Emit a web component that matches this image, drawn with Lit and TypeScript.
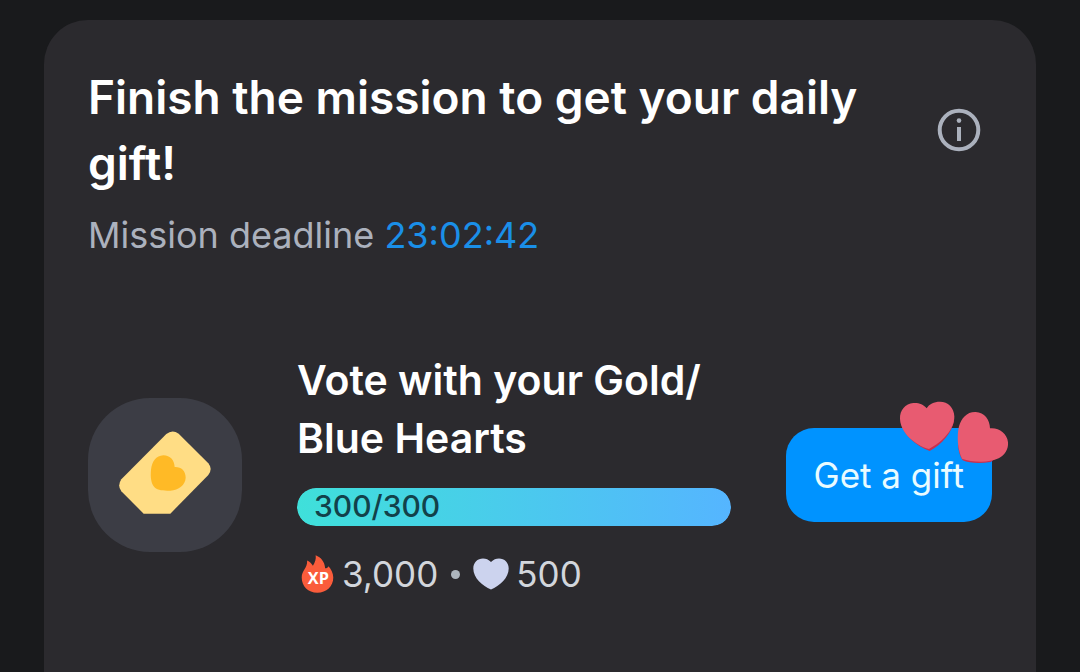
import { LitElement, html, css } from "lit";
import { customElement, property, state } from "lit/decorators.js";

@customElement("gift-button")
class GiftButton extends LitElement {
  static styles = css`
    :host {
      display: block;
      position: relative;
      flex: none;
    }
    .button {
      display: block;
      height: 94px;
      padding: 0 28px;
      border: 0;
      border-radius: 28px;
      background: #0093ff;
      color: #e9fbff;
      font: 400 35px/52px Inter, sans-serif;
      white-space: nowrap;
      cursor: pointer;
    }
    .hearts {
      position: absolute;
      top: -28px;
      right: -18px;
      width: 112px;
      height: 65px;
      pointer-events: none;
    }
  `;

  render() {
    return html`
      <button class="button" type="button">Get a gift</button>
      <svg class="hearts" viewBox="384 45 336 195" aria-hidden="true">
        <path fill="#c9304f" d="M392 112C400 150 436 182 479 198C516 178 545 144 552 108Z" />
        <path fill="#e85b71" d="M470 70C460 57 446 53 430 54C406 56 389 76 390 101C392 144 434 179 477 192C517 172 554 132 553 94C552 68 534 50 510 50C492 50 477 57 470 70Z" />
        <path fill="#c9304f" d="M564 180C566 200 570 215 578 226C598 235 630 236 662 231L700 205Z" />
        <path fill="#e85b71" d="M660 130C660 104 643 82 617 81C591 80 574 99 567 124C560 153 563 194 576 221C606 232 655 235 686 220C704 211 716 193 714 172C712 145 686 127 660 130Z" />
      </svg>
    `;
  }
}

@customElement("mission-progress")
class MissionProgress extends LitElement {
  @property({ type: Number }) value = 0;
  @property({ type: Number }) max = 100;

  static styles = css`
    :host {
      display: block;
    }
    .track {
      display: grid;
      height: 38px;
      border-radius: 19px;
      background: #3c3d45;
      overflow: hidden;
    }
    .fill,
    .label {
      grid-area: 1 / 1;
    }
    .fill {
      border-radius: 19px;
      background: linear-gradient(90deg, #3fe0da, #55b5ff);
    }
    .label {
      padding-left: 17px;
      color: #12414a;
      font-size: 30px;
      font-weight: 500;
      line-height: 36px;
    }
  `;

  render() {
    return html`
      <div
        class="track"
        role="progressbar"
        aria-label="Mission progress"
        aria-valuenow=${this.value}
        aria-valuemax=${this.max}
      >
        <div class="fill" style="width: ${(this.value / this.max) * 100}%"></div>
        <span class="label">${this.value}/${this.max}</span>
      </div>
    `;
  }
}

@customElement("app-root")
class AppRoot extends LitElement {
  @state() deadline = "23:02:42";

  static styles = css`
    :host {
      display: flex;
      flex-direction: column;
      box-sizing: border-box;
      min-height: 100vh;
      padding: 20px 44px 0;
      background: #191a1c;
      color: #fff;
      font-family: Inter, sans-serif;
    }
    .card {
      flex: 1;
      padding: 44px;
      border-radius: 44px 44px 0 0;
      background: #2b2a2e;
    }
    .header {
      display: flex;
      align-items: center;
      gap: 40px;
    }
    .title {
      flex: 1;
      margin: 0;
      font-size: 46px;
      font-weight: 600;
      line-height: 66px;
    }
    .info {
      flex: none;
      width: 44px;
      height: 44px;
      margin-right: 11px;
      padding: 0;
      border: 0;
      background: none;
      cursor: pointer;
    }
    .info-icon {
      display: block;
      width: 44px;
      height: 44px;
    }
    .deadline {
      margin: 13px 0 0;
      color: #abb1bd;
      font-size: 36px;
      line-height: 52px;
    }
    .time {
      color: #1a8fe8;
    }
    .mission {
      display: flex;
      align-items: center;
      gap: 55px;
      margin-top: 90px;
    }
    .badge {
      display: grid;
      flex: none;
      place-items: center;
      width: 154px;
      height: 154px;
      border-radius: 62px;
      background: #3c3d45;
    }
    .ticket {
      width: 92px;
      height: 84px;
      margin-bottom: 4px;
    }
    .details {
      flex: 1;
      min-width: 0;
    }
    .name {
      margin: 0 0 21px;
      font-size: 41px;
      font-weight: 600;
      line-height: 58px;
    }
    .rewards {
      display: flex;
      align-items: center;
      margin-top: 23px;
      padding-left: 4px;
      color: #d2d6dc;
      font-size: 35px;
      line-height: 50px;
    }
    .flame {
      width: 33px;
      height: 38px;
      margin-right: 8px;
    }
    .xp {
      font: 700 48px "Open Sans", sans-serif;
    }
    .dot {
      width: 9px;
      height: 9px;
      margin: 0 13px;
      border-radius: 50%;
      background: #adb5bd;
    }
    .heart {
      width: 36px;
      height: 32px;
      margin-right: 7px;
    }
  `;

  render() {
    return html`
      <main class="card">
        <header class="header">
          <h1 class="title">Finish the mission to get your daily gift!</h1>
          <button class="info" type="button" aria-label="Mission info">
            <svg class="info-icon" viewBox="0 0 44 44" aria-hidden="true">
              <circle cx="22" cy="22" r="19.3" fill="none" stroke="#abb1bd" stroke-width="4" />
              <circle cx="22" cy="12.6" r="2.3" fill="#abb1bd" />
              <rect x="20" y="19" width="4" height="14" fill="#abb1bd" />
            </svg>
          </button>
        </header>
        <p class="deadline">
          Mission deadline <time class="time">${this.deadline}</time>
        </p>
        <section class="mission">
          <div class="badge">
            <svg class="ticket" viewBox="147 154 276 252" aria-hidden="true">
              <path fill="#ffdd85" d="M289 163Q307 148 326 162L415 251Q429 268 415 286L301 402H221L154 335Q141 318 154 299Z" />
              <path fill="#ffba26" d="M314 262C313 242 301 227 280 227C258 228 246 246 243 270C241 292 243 308 251 320C260 332 279 334 301 333C326 331 346 316 347 294C347 273 333 261 314 262Z" />
            </svg>
          </div>
          <div class="details">
            <h2 class="name">Vote with your Gold/<wbr />Blue Hearts</h2>
            <mission-progress .value=${300} .max=${300}></mission-progress>
            <div class="rewards">
              <svg class="flame" viewBox="50 242 95 112" role="img" aria-label="XP">
                <path fill="#fa5c3b" d="M67 258C75 262 80 267 84 274C90 265 94 254 92 243C108 249 119 263 120 281C125 281 128 279 130 275C137 283 144 295 144 308C144 334 124 353 97 353C70 353 51 334 51 308C51 287 68 281 67 258Z" />
                <text class="xp" x="100" y="327" text-anchor="middle" fill="#fff">XP</text>
              </svg>
              <span>3,000</span>
              <span class="dot"></span>
              <svg class="heart" viewBox="0 0 36 32" role="img" aria-label="Hearts">
                <path fill="#ccd3ee" d="M18 4C15.5 1.5 13 .5 10 .5C4.500 .5 .3 4.500 .3 10.500C.3 20 9.500 28 18 31.500C26.500 28 35.700 20 35.700 10.500C35.700 4.500 31.500 .5 26 .5C23 .5 20.500 1.500 18 4Z" />
              </svg>
              <span>500</span>
            </div>
          </div>
          <gift-button></gift-button>
        </section>
      </main>
    `;
  }
}
